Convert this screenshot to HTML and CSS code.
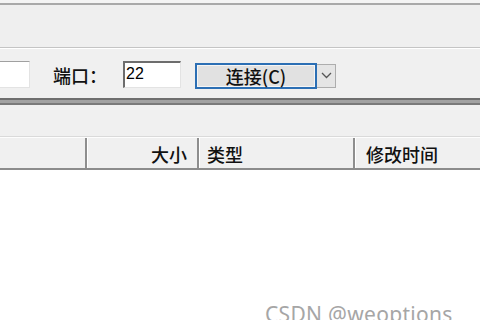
FILE: index.html
```html
<!DOCTYPE html>
<html lang="zh-CN">
<head>
    <meta charset="UTF-8">
    <title>SFTP</title>
    <link rel="stylesheet" href="styles.css">
</head>
<body>
    <div class="window">
        <div class="top-edge"></div>
        <div class="toolbar-band"></div>

        <div class="connect-row">
            <div class="host-input"></div>
            <label class="port-label">端口：</label>
            <div class="port-input">22</div>
            <div class="connect-group">
                <button class="connect-btn">连接(C)</button>
                <div class="drop-btn">
                    <svg width="11" height="7" viewBox="0 0 11 7">
                        <polyline points="1,1 5.5,5.5 10,1" fill="none" stroke="#555" stroke-width="1.3"/>
                    </svg>
                </div>
            </div>
        </div>

        <div class="splitter"></div>
        <div class="tab-band"></div>

        <div class="list-header">
            <div class="col col-name"></div>
            <div class="col col-size">大小</div>
            <div class="col col-type">类型</div>
            <div class="col col-time">修改时间</div>
        </div>

        <div class="list-body"></div>

        <div class="watermark">CSDN @weoptions</div>
    </div>
</body>
</html>
```

FILE: styles.css
```css
body {
    margin: 0;
    background-color: #f0f0f0;
    font-family: "Noto Sans CJK SC", "Microsoft YaHei", sans-serif;
    color: #111;
}
.window {
    position: relative;
    width: 480px;
    height: 320px;
    overflow: hidden;
    display: flex;
    flex-direction: column;
}
.top-edge {
    height: 3px;
    background: #f4f4f4;
    border-bottom: 2px solid #a9a9a9;
}
.toolbar-band {
    height: 42px;
    background: #efefef;
    border-bottom: 1px solid #c4c4c4;
    box-shadow: 0 1px 0 #ffffff;
}
.connect-row {
    height: 50px;
    display: flex;
    align-items: center;
    padding-top: 3px;
    box-sizing: border-box;
}
.host-input {
    width: 30px;
    height: 27px;
    background: #fff;
    border-top: 1px solid #a0a0a0;
    border-right: 1px solid #e3e3e3;
    border-bottom: 1px solid #e3e3e3;
    box-sizing: border-box;
}
.port-label {
    margin-left: 23px;
    font-size: 18px;
    font-weight: 500;
    width: 70px;
    line-height: 20px;
}
.port-input {
    width: 58px;
    height: 27px;
    background: #fff;
    border-top: 2px solid #6d6d6d;
    border-left: 2px solid #6d6d6d;
    border-right: 1px solid #e3e3e3;
    border-bottom: 1px solid #e3e3e3;
    box-sizing: border-box;
    font-family: "Liberation Sans", Arial, sans-serif;
    font-size: 16px;
    line-height: 22px;
    padding-left: 1px;
    color: #000;
}
.connect-group {
    display: flex;
    margin-left: 14px;
    margin-top: 2px;
}
.connect-btn {
    width: 122px;
    height: 26px;
    border: 2px solid #2c6fb4;
    background: #e1e1e1;
    box-shadow: inset 0 0 0 1px #f5f5f5;
    font-family: "Noto Sans CJK SC", sans-serif;
    font-size: 18px;
    font-weight: 500;
    line-height: 20px;
    padding: 0;
    color: #111;
}
.drop-btn {
    width: 19px;
    height: 24px;
    margin-top: 1px;
    background: #e5e5e5;
    border: 1px solid #adadad;
    border-left: none;
    box-sizing: border-box;
    display: flex;
    align-items: center;
    justify-content: center;
}
.splitter {
    height: 3px;
    background: #a2a2a2;
    border-top: 2px solid #6e6e6e;
    border-bottom: 2px solid #7a7a7a;
}
.tab-band {
    height: 31px;
    background: #f0f0f0;
    border-bottom: 1px solid #dadada;
}
.list-header {
    height: 30px;
    display: flex;
    background: #f0f0f0;
    border-top: 1px solid #fdfdfd;
    border-bottom: 2px solid #8c8c8c;
    font-size: 18px;
    font-weight: 500;
    line-height: 32px;
}
.col {
    box-sizing: border-box;
    border-right: 2px solid #8e8e8e;
    box-shadow: 1px 0 0 #ffffff;
}
.col-name {
    width: 87px;
}
.col-size {
    width: 112px;
    text-align: right;
    padding-right: 10px;
}
.col-type {
    width: 156px;
    padding-left: 8px;
}
.col-time {
    flex: 1;
    border-right: none;
    box-shadow: none;
    padding-left: 11px;
}
.list-body {
    flex: 1;
    background: #ffffff;
}
.watermark {
    position: absolute;
    left: 265px;
    top: 300px;
    font-family: "Noto Sans", sans-serif;
    font-size: 21px;
    color: #a6a6a6;
    letter-spacing: 0.3px;
}
```
